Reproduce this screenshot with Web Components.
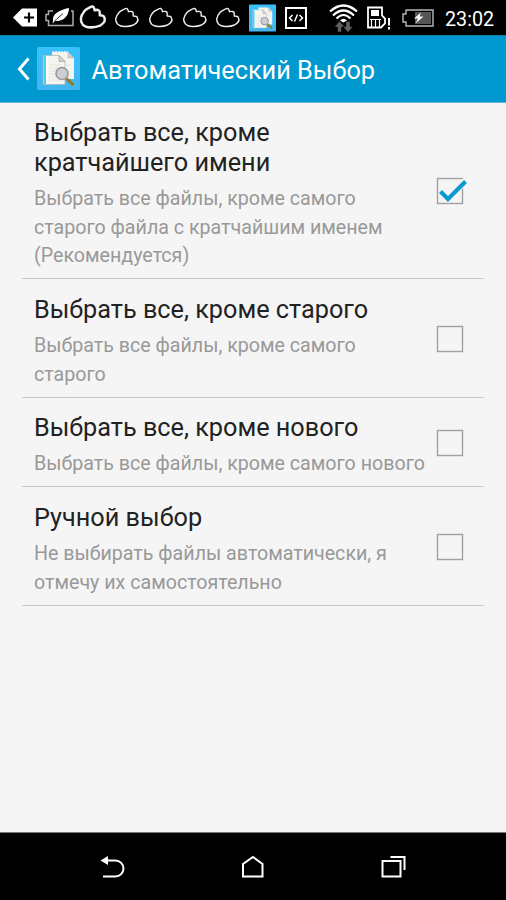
<!DOCTYPE html>
<html lang="ru">
<head>
<meta charset="utf-8">
<title>Автоматический Выбор</title>
<style>
html,body{margin:0;height:100%;background:#f5f5f5;font-family:Roboto,"Noto Sans",sans-serif;overflow:hidden}
</style>
</head>
<body>
<phone-screen>
  <status-bar slot="status" time="23:02"></status-bar>
  <action-bar slot="header">Автоматический Выбор</action-bar>
  <option-row checked><span slot="title">Выбрать все, кроме<br>кратчайшего имени</span>Выбрать все файлы, кроме самого<br>старого файла с кратчайшим именем<br>(Рекомендуется)</option-row>
  <option-row><span slot="title">Выбрать все, кроме старого</span>Выбрать все файлы, кроме самого<br>старого</option-row>
  <option-row><span slot="title">Выбрать все, кроме нового</span>Выбрать все файлы, кроме самого нового</option-row>
  <option-row><span slot="title">Ручной выбор</span>Не выбирать файлы автоматически, я<br>отмечу их самостоятельно</option-row>
  <nav-bar slot="nav"></nav-bar>
</phone-screen>
<script>
const define = (name, render) => customElements.define(name, class extends HTMLElement {
  connectedCallback() {
    if (!this.shadowRoot) this.attachShadow({mode: 'open'}).innerHTML = render(this);
  }
});

define('phone-screen', () => `
<style>
:host{display:flex;flex-direction:column;width:506px;height:900px;background:#f5f5f5}
main{flex:1;min-height:0;padding:0 22px}
</style>
<slot name="status"></slot><slot name="header"></slot><main><slot></slot></main><slot name="nav"></slot>`);

define('app-icon', () => `
<style>:host{display:block}svg{display:block;width:100%;height:100%}</style>
<svg viewBox="0 0 43 43">
  <defs><linearGradient id="g" x2="0" y2="1"><stop stop-color="#38c0fb"/><stop offset="1" stop-color="#42b6f0"/></linearGradient></defs>
  <rect width="43" height="43" rx="1.5" fill="url(#g)"/>
  <path d="M15 5h16l6 6v21H15z" fill="#f4f3ee"/><path d="M15 4.700h16" stroke="#fff" stroke-width=".8" stroke-dasharray="2 1"/>
  <path d="M31 5l6 6h-6z" fill="#cfcfc9" stroke="#aaa" stroke-width=".4"/>
  <path d="M6 8.500h16l6 6V37.500H6z" fill="#f6f5f0" stroke="#a5b5b8" stroke-width=".7"/>
  <path d="M6.500 9h2.500v28H6.500z" fill="#42d1ef"/><path d="M10 9v28" stroke="#fff" stroke-width="1.500"/>
  <path d="M22 8.500l6 6h-6z" fill="#d4d4cc" stroke="#999" stroke-width=".6"/>
  <path d="M12 18h13M12 21h12M12 24h8M12 27h7M12 30h8M12 33h12M28 18h6" stroke="#deddd8" stroke-width=".8"/>
  <path d="M29.500 31.500l7 6.500" stroke="#9c7718" stroke-width="3"/>
  <circle cx="25" cy="26.500" r="6" fill="#c9c9d0" fill-opacity=".9" stroke="#98989a" stroke-width="1.500"/>
</svg>`);

define('status-bar', el => {
  const cloud = (left, weight, w, h) => `<svg style="margin-left:${left}px;margin-bottom:1px" width="${w}" height="${h}" viewBox="0 0 24 19" preserveAspectRatio="none"><path d="M9.500 1C11 .1 12.500 .3 13 2L13.500 3.700C15.500 3 18.200 3.300 18.200 5.200V8C20 8 21.800 8 22.300 9.500C24 12.500 22 15 18.500 17C13.500 19 5.500 19.200 2.500 16C-.5 12.500 1 8 4 4.500C6 2.300 8 2 9.500 1Z" stroke="#eee" stroke-width="${weight}" stroke-linejoin="round" fill="none"/></svg>`;
  return `
<style>
:host{display:block;height:35px;background:#000;color:#fff;flex:none}
.bar{display:flex;height:35px;align-items:center;box-sizing:border-box;padding-left:13px}
svg{display:block;flex:none;overflow:visible}
app-icon{width:27px;height:28px;margin-left:9px;flex:none}
time{font-size:19.700px;line-height:35px;margin:3px 0 0 11px;white-space:nowrap}
</style>
<div class="bar">
<svg width="24" height="19" viewBox="0 0 24 19"><path d="M0 9.500L9 .5h15v18H9z" fill="#fff"/><path d="M16 4.500v10M11 9.500h10" stroke="#000" stroke-width="2.200"/></svg>
<svg style="margin-left:8px" width="29" height="19" viewBox="0 0 29 19"><path d="M8 3H3.500v3.500H1v6h2.500v5h24.500V3h-2" fill="none" stroke="#aaa" stroke-width="1.500"/><path d="M8 13C7 6 14 2 24 0C24 8 18 14 10 13L7.500 15.500z" fill="#fff"/><path d="M9.500 13L18 5.500" stroke="#000" stroke-width=".8"/></svg>
${cloud(6, 2.2, 26, 22)}${cloud(9, 1.4, 24, 19)}${cloud(10, 1.4, 24, 19)}${cloud(10, 1.4, 24, 19)}${cloud(9, 1.4, 24, 19)}
<app-icon></app-icon>
<svg style="margin-left:9px" width="22" height="22" viewBox="0 0 22 22"><path d="M1 1h20v20H1z" fill="none" stroke="#fff" stroke-width="2"/><path d="M7.500 8L4.500 11l3 3M14.500 8l3 3-3 3M12.500 7.500l-3 7" fill="none" stroke="#fff" stroke-width="1.500"/></svg>
<svg style="margin-left:22px" width="29" height="28" viewBox="0 0 29 28"><path d="M1 7.500Q14.500-4.500 28 7.500M4 11.500Q14.500 1.500 25 11.500M7.500 14.500Q14.500 7.500 21.500 14.500" fill="none" stroke="#fff" stroke-width="2.200"/><path d="M11 16.500Q14.500 13 18 16.500L14.500 18.500z" fill="#fff"/><path d="M10.500 17l5 6h-3v5h-4v-5h-3zM17 17.500h4v5h3l-5 6-5-6h3z" fill="#606060" stroke="#000" stroke-width=".5"/></svg>
<svg style="margin-left:9px" width="24" height="24" viewBox="0 0 24 24"><path d="M1 1.500h14v8l3 3v5l-4 4H1z" fill="none" stroke="#fff" stroke-width="1.800"/><path d="M4 4h8v6H4z" fill="#fff"/><path d="M3 13.500h11M4.500 14v7M8.500 14v7M12.500 14v7" stroke="#fff" stroke-width="1.200"/><path d="M19.500 11h5v13h-5z" fill="#000"/><path d="M22 12v7.500M22 21v2.500" stroke="#fff" stroke-width="2"/></svg>
<svg style="margin-left:11px" width="32" height="18" viewBox="0 0 32 18"><path d="M4 1h27v16H4v-4H1V5h3z" fill="none" stroke="#b8b8b8" stroke-width="1.400"/><path d="M13 3h16v12H13z" fill="#555"/><path d="M19 3.500L12 9.500h4l-2.500 5 8-7h-4z" fill="#fff"/></svg>
<time>${el.getAttribute('time')}</time>
</div>`;
});

define('action-bar', () => `
<style>
:host{display:flex;align-items:center;height:68px;flex:none;box-sizing:border-box;background:#0099cf;border-top:1px solid #0780ac;border-bottom:1px solid #62b9da;padding-left:17px;color:#fff;font-size:25.300px}
svg{flex:none}
app-icon{width:43px;height:43px;margin:0 0 1px 6px;flex:none}
div{margin-left:11.500px;line-height:30px;padding-top:3px;white-space:nowrap}
</style>
<svg width="14" height="24" viewBox="0 0 14 24"><path d="M11.500 1.500L2.500 12l9 10.500" fill="none" stroke="#fff" stroke-width="3"/></svg>
<app-icon></app-icon><div><slot></slot></div>`);

define('option-row', el => `
<style>
:host{display:flex;align-items:center;justify-content:space-between;box-sizing:border-box;border-bottom:1px solid #c8c8c8;padding:15.700px 20px 7.400px 12px}
:host([checked]){padding-top:15.200px}
.title{font-size:25.250px;line-height:29.600px;color:#222;white-space:nowrap}
.summary{font-size:19.650px;line-height:28.600px;color:#999;margin-top:7.600px;white-space:nowrap;width:391px}
svg{display:block;flex:none;overflow:visible;margin-bottom:8px}
</style>
<div><div class="title"><slot name="title"></slot></div><div class="summary"><slot></slot></div></div>
<svg width="28" height="27" viewBox="0 0 28 27"><rect x="1.500" y="1.500" width="25" height="25" fill="none" stroke="#a0a0a0" stroke-width="1.400"/>${el.hasAttribute('checked') ? '<path d="M5 14.500l7 7L29 4" fill="none" stroke="#f5f5f5" stroke-width="7"/><path d="M4.500 14.500l7.500 7.500L29.500 4.500" fill="none" stroke="#0c9bd0" stroke-width="4.200"/>' : ''}</svg>`);

define('nav-bar', () => `
<style>
:host{display:grid;grid-template-columns:repeat(3,1fr);width:422px;padding:0 42px;height:67px;flex:none;background:#000;border-top:1px solid #777;align-items:center;justify-items:center}
svg{display:block;overflow:visible}
</style>
<svg width="25" height="24" viewBox="0 0 25 24"><path d="M7 5.500h8.500a8 8 0 0 1 0 16H3" fill="none" stroke="#fff" stroke-width="2"/><path d="M.5 5.500l7.500-4.500v9z" fill="#fff"/></svg>
<svg width="22" height="24" viewBox="0 0 22 24"><path d="M1 21.500V9L11 2l9.500 7v12.500z" fill="none" stroke="#fff" stroke-width="2"/></svg>
<svg width="25" height="24" viewBox="0 0 25 24"><path d="M1.500 6h18v15.500H1.500zM9.500 2h14v13" fill="none" stroke="#fff" stroke-width="2"/></svg>`);
</script>
</body>
</html>
